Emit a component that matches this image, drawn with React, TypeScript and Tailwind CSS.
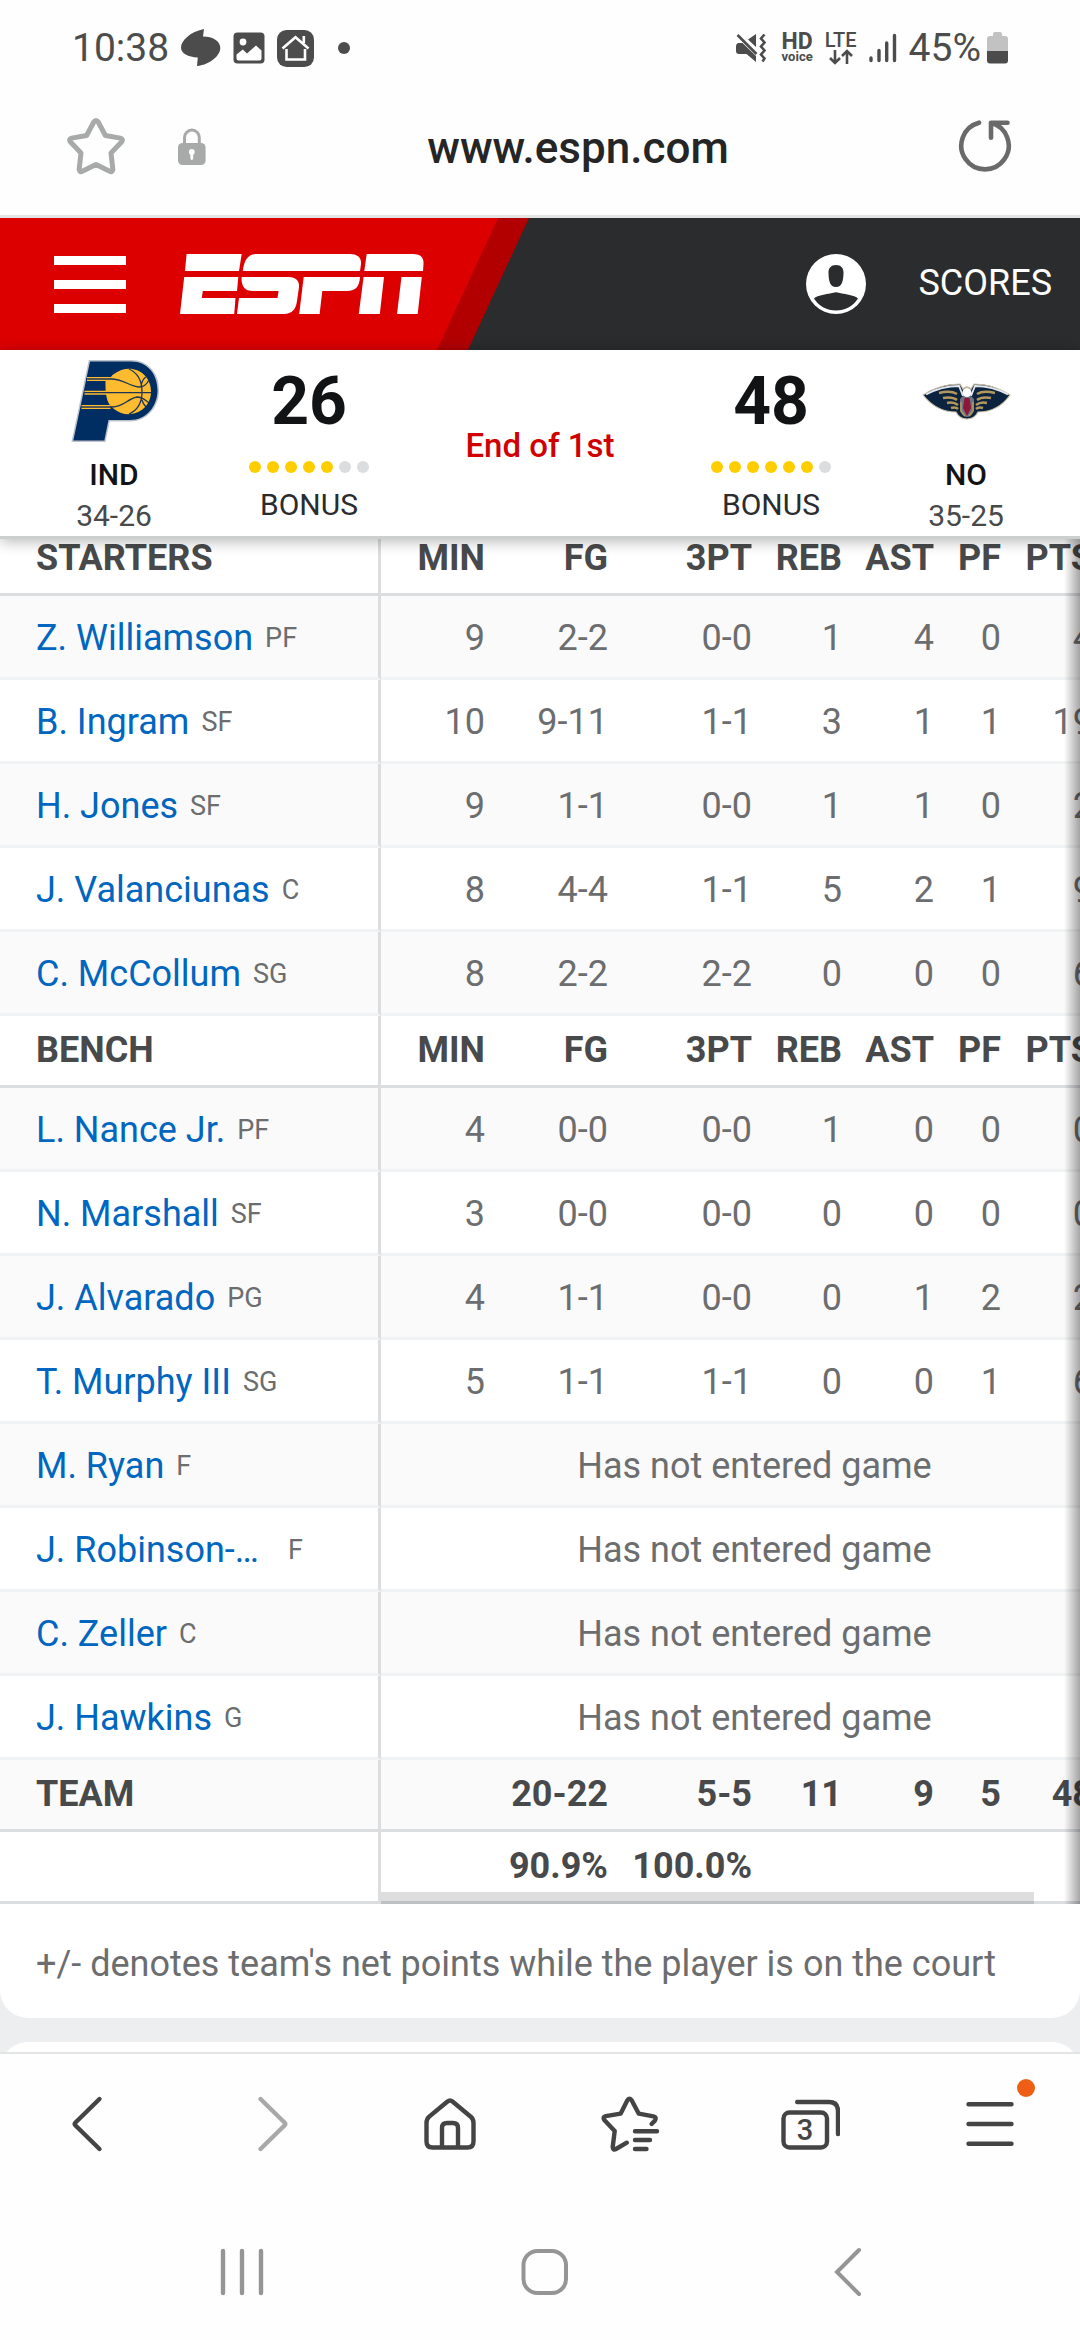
import type { ReactNode } from "react";

interface Player {
  name: string;
  pos: string;
  // MIN, FG, 3PT, REB, AST, PF, PTS. Missing when the player has not played yet.
  stats?: string[];
}

const columns = ["MIN", "FG", "3PT", "REB", "AST", "PF", "PTS"];

const starters: Player[] = [
  { name: "Z. Williamson", pos: "PF", stats: ["9", "2-2", "0-0", "1", "4", "0", "4"] },
  { name: "B. Ingram", pos: "SF", stats: ["10", "9-11", "1-1", "3", "1", "1", "19"] },
  { name: "H. Jones", pos: "SF", stats: ["9", "1-1", "0-0", "1", "1", "0", "2"] },
  { name: "J. Valanciunas", pos: "C", stats: ["8", "4-4", "1-1", "5", "2", "1", "9"] },
  { name: "C. McCollum", pos: "SG", stats: ["8", "2-2", "2-2", "0", "0", "0", "6"] },
];

const bench: Player[] = [
  { name: "L. Nance Jr.", pos: "PF", stats: ["4", "0-0", "0-0", "1", "0", "0", "0"] },
  { name: "N. Marshall", pos: "SF", stats: ["3", "0-0", "0-0", "0", "0", "0", "0"] },
  { name: "J. Alvarado", pos: "PG", stats: ["4", "1-1", "0-0", "0", "1", "2", "2"] },
  { name: "T. Murphy III", pos: "SG", stats: ["5", "1-1", "1-1", "0", "0", "1", "6"] },
  { name: "M. Ryan", pos: "F" },
  { name: "J. Robinson-Earl", pos: "F" },
  { name: "C. Zeller", pos: "C" },
  { name: "J. Hawkins", pos: "G" },
];

const teamTotals = ["", "20-22", "5-5", "11", "9", "5", "48"];
const teamPercents = ["", "90.9%", "100.0%", "", "", "", ""];

function StatusBar() {
  return (
    <div className="flex h-24 items-center justify-between pl-18 pr-18 text-[39px] leading-none text-[#4c4c4c]">
      <div className="flex items-center gap-3">
        <span>10:38</span>
        <svg className="h-[38px] w-10" viewBox="0 0 40 38" fill="currentColor">
          <path d="M23 0 22 7.5C32 7.5 39.3 12 39.3 19S30 35.5 16 37l.8-8.5C7 28 0 24.500 0 18.500S8 3 23 0z" />
        </svg>
        <svg className="h-8 w-8" viewBox="0 0 32 32">
          <rect x="0.500" y="0.500" width="31" height="31" rx="4" fill="currentColor" />
          <circle cx="10" cy="10" r="3.400" fill="#fff" />
          <path d="M3.500 22.500 9.800 17.500l4.200 4 9-8 5.500 5v8q0 2-2 2h-21q-2 0-2-2z" fill="#fff" />
        </svg>
        <svg className="h-[37px] w-[37px]" viewBox="0 0 37 37" fill="none" stroke="#fff" strokeWidth="2.600">
          <rect width="37" height="37" rx="9.500" fill="currentColor" stroke="none" />
          <path d="M5.500 18.500 18.500 7.200l13 11.300M26.800 6v7M9.500 19v10.500h18.500V19" />
        </svg>
        <span className="ml-3 h-3 w-3 rounded-full bg-[#4c4c4c]" />
      </div>
      <div className="flex items-center gap-3">
        <svg className="mr-1 h-8 w-[30px]" viewBox="0 0 30 32" fill="currentColor">
          <path d="M2 11h4.500l13.500 13v6L10.500 22H3q-3 0-3-3v-5q0-2 2-3zM20 2v13l-8-7.500z" />
          <path d="M1.500 3 20.500 22M28.500 2.500l-3.500 4 3.500 4-3.500 4 3.500 4-3.500 4 3.500 4-2 3" fill="none" stroke="currentColor" strokeWidth="2.600" />
        </svg>
        <div className="flex flex-col items-center font-bold">
          <span className="text-[23px] leading-[18px]">HD</span>
          <span className="text-[13px] leading-3">voice</span>
        </div>
        <div className="flex flex-col items-center font-medium">
          <span className="text-xl leading-[18px]">LTE</span>
          <svg className="h-4 w-6" viewBox="0 0 24 16" fill="none" stroke="currentColor" strokeWidth="2.600">
            <path d="M6 1v13M1 9l5 5 5-5M18 15V2M13 7l5-5 5 5" />
          </svg>
        </div>
        <svg className="h-[30px] w-7" viewBox="0 0 28 30" stroke="currentColor" strokeWidth="3.400" strokeLinecap="round">
          <path d="M2 25v2.500M10 17.500v10M17.700 10v17.500M25.500 2.500v25" />
        </svg>
        <div className="flex items-center gap-1.5">
          <span>45%</span>
          <svg className="h-8 w-[21px]" viewBox="0 0 21 32">
            <path d="M6 2q0-2 2-2h5q2 0 2 2v2h3q3 0 3 3v12H0V7q0-3 3-3h3z" fill="#c2c2c2" />
            <path d="M0 19h21v9.500q0 3-3 3H3q-3 0-3-3z" fill="currentColor" />
          </svg>
        </div>
      </div>
    </div>
  );
}

function AddressBar() {
  return (
    <div className="flex items-center border-b-3 border-[#e3e5e5] px-[66px] pb-[39px] pt-5">
      <div className="flex items-center gap-[52px]">
        <button aria-label="Add bookmark" className="text-[#a8a9a9]">
          <svg className="h-15 w-15" viewBox="0 0 60 60" fill="none" stroke="currentColor" strokeWidth="5" strokeLinejoin="round">
            <path d="M27.800 6q2.200-3 4.400 0l7.200 13.500 15 2.600q3.200 1 1.300 3.600L45 37l1.900 16.500q-.6 3-3.200 1.800L30 48.500l-13.700 6.800q-2.600 1.200-3.200-1.800L15 37 4.300 25.700q-1.900-2.600 1.300-3.600l15-2.600z" />
          </svg>
        </button>
        <svg className="h-[37px] w-7 text-[#a8a9a9]" viewBox="0 0 28 37">
          <path d="M6.500 17V9.500a7.300 7.300 0 0 1 14.800 0V17" fill="none" stroke="currentColor" strokeWidth="3" />
          <rect y="15" width="27.600" height="22" rx="4.500" fill="currentColor" />
          <circle cx="13.800" cy="24" r="2.900" fill="#fff" />
          <path d="M13.800 24v6.500" stroke="#fff" strokeWidth="2.800" strokeLinecap="round" />
        </svg>
      </div>
      <span className="flex-1 pr-1 pt-1 text-center text-[44px] font-medium leading-14 text-[#252525]">www.espn.com</span>
      <button aria-label="Reload" className="text-[#6a6a6a]">
        <svg className="h-15 w-15" viewBox="0 0 60 60" fill="none" stroke="currentColor" strokeWidth="4.600" strokeLinecap="round" strokeLinejoin="round">
          <path d="M25 6.700a23.700 23.700 0 1 0 12 0h16.500M37 6.700v15" />
        </svg>
      </button>
    </div>
  );
}

function EspnLogo() {
  return (
    <svg className="h-15 w-61" viewBox="0 0 244 60" fill="#fff">
      <path d="M6.600 0h55.100L59 17H5z" />
      <path d="M4.200 23h54.100L57 37H22.800l-1 7h33.700l-1.300 16H0z" />
      <path d="M62.800 17C64 6 68 0 77 0h93c8 0 11.500 4 11 10l-1 7z" />
      <path d="M61.700 23H109c7 0 10.500 4 10 10l-2 14c-1 8-5 13-13 13H57l2-16h38.500l1.100-7H73c-9 0-12-6-11.300-14z" />
      <path d="M123.700 23H180c-.5 9-4 14-13 14h-24.700l-2.700 23h-20.400z" />
      <path d="M186.700 0H233c8 0 11 4 10.500 10l-.5 7h-58.700z" />
      <path d="M183.600 23H204l-4.200 37h-21zM221.500 23h20.300l-4.100 37H217z" />
    </svg>
  );
}

function SiteHeader() {
  return (
    <header className="flex h-33 items-stretch justify-between bg-[#2b2c2d]">
      <div className="w-[529px] bg-[#b20000] [clip-path:polygon(0_0,100%_0,468px_100%,0_100%)]">
        <div className="flex h-full w-[498px] items-center gap-[54px] bg-[#dd0000] pl-[54px] [clip-path:polygon(0_0,100%_0,437px_100%,0_100%)]">
          <button aria-label="Menu" className="flex flex-col gap-[15px]">
            <span className="h-[9px] w-18 bg-white" />
            <span className="h-[9px] w-18 bg-white" />
            <span className="h-[9px] w-18 bg-white" />
          </button>
          <a href="#" aria-label="ESPN">
            <EspnLogo />
          </a>
        </div>
      </div>
      <div className="flex items-center gap-13 pr-7">
        <button aria-label="Account">
          <svg className="h-15 w-15" viewBox="0 0 60 60">
            <circle cx="30" cy="30" r="30" fill="#fff" />
            <path d="M30 11c5 0 7.700 3 7.500 8C37.300 27 36 33 30 33s-7.300-6-7.500-14c-.2-5 2.500-8 7.500-8zM8 44.500c3-3.200 15-4.500 22-6.200 7 1.700 19 3 22 6.200-5 8-13 12-22 12s-17-4-22-12z" fill="#2b2c2d" />
          </svg>
        </button>
        <a href="#" className="pb-0.5 text-4xl text-white">
          SCORES
        </a>
      </div>
    </header>
  );
}

function PacersLogo() {
  return (
    <svg className="h-[90px] w-[90px]" viewBox="0 0 90 90">
      <path d="M21 5.500h41c17 0 26.500 13 26.500 29S77 64 61 64H39.500l-4.200 20.500h-31z" fill="#002d62" stroke="#bcc2ca" strokeWidth="3" />
      <path d="M21 5.500h41c17 0 26.500 13 26.500 29S77 64 61 64H39.500l-4.200 20.500h-31z" fill="#002d62" />
      <path d="M18 23h24M15.500 36.700h24M12.500 51h29" stroke="#fdbb30" strokeWidth="4" />
      <path d="M36.500 24.500C44 22 40 21 45 18c16-12 37-2 37 17.500S60 65 45 53c-4-4-9-6-8.500-28.500z" fill="#fdbb30" />
      <path d="M17 23h25c12 0 18 7 28 8 5 0 8-3 10-7M15 36.700h67M12 51h31c12 0 15-8 25-10 6 0 9 4 12 6M60 13c9 4 13 13 13 23s-4 18-13 22M72 30c1-5 3-8 5-9M73 44c1 4 3 6 4 7" fill="none" stroke="#1c3557" strokeWidth="1.300" />
    </svg>
  );
}

function PelicansLogo() {
  return (
    <svg className="h-[90px] w-[90px]" viewBox="0 0 90 90">
      <path d="M2 39C14 31 27 28 39 28l3 5q4-4 8 0l3-5c12 0 24 3 36 11C82 49 72 56 57 56c-2 4-6 7-11 7s-9-3-11-7C20 56 10 49 2 39z" fill="#0c2340" stroke="#c9bfa4" strokeWidth="1.200" />
      <path d="M5 38.500C15 33 26 30 38 30l4 10M87 38.500C77 33 66 30 54 30l-4 10" fill="none" stroke="#e4e8ee" strokeWidth="1.800" />
      <path d="M18 37c8-2 13-2 18 1M22 42c6-1 10-1 14 2M26 47c4-1 7-1 11 2M30 52c3-1 5-1 7 1M74 37c-8-2-13-2-18 1M70 42c-6-1-10-1-14 2M66 47c-4-1-7-1-11 2M62 52c-3-1-5-1-7 1" fill="none" stroke="#b4975a" strokeWidth="2.600" />
      <path d="M39 43q7-8 14 0v11q-2 7-7 7t-7-7z" fill="#6f7480" />
      <circle cx="46" cy="36.500" r="4.500" fill="#fff" />
      <path d="M43.500 42h5l1.500 10-4 8-4-8z" fill="#8d1738" />
      <path d="M40 46v9l4 5M52 46v9l-4 5" fill="none" stroke="#b4975a" strokeWidth="1.600" />
    </svg>
  );
}

function Team({ logo, abbr, record }: { logo: ReactNode; abbr: string; record: string }) {
  return (
    <div className="flex flex-col items-center pt-1.5 text-[30px]">
      {logo}
      <span className="mt-2 font-medium leading-[42px] text-[#121315]">{abbr}</span>
      <span className="leading-10 text-[#48494a]">{record}</span>
    </div>
  );
}

function Score({ points, timeouts }: { points: number; timeouts: number }) {
  return (
    <div className="flex flex-col items-center pt-4">
      <span className="text-[66px] font-bold leading-[72px] text-[#121315]">{points}</span>
      <div className="mt-[23px] flex gap-1.5">
        {Array.from({ length: 7 }, (_, i) => (
          <span key={i} className={`h-3 w-3 rounded-full ${i < timeouts ? "bg-[#ffce00]" : "bg-[#dcdddf]"}`} />
        ))}
      </div>
      <span className="mt-3.5 text-[30px] leading-9 text-[#2b2c2d]">BONUS</span>
    </div>
  );
}

function ScoreStrip() {
  return (
    <section className="relative z-10 grid grid-cols-[228px_162px_1fr_162px_228px] border-b-3 border-[#cdcfcf] bg-white shadow-[0_2px_14px_rgba(0,0,0,0.3)]">
      <Team logo={<PacersLogo />} abbr="IND" record="34-26" />
      <Score points={26} timeouts={5} />
      <div className="flex items-center justify-center pt-1.5 text-[33px] font-medium text-[#d00000]">End of 1st</div>
      <Score points={48} timeouts={6} />
      <Team logo={<PelicansLogo />} abbr="NO" record="35-25" />
    </section>
  );
}

function HeaderRow({ title }: { title: string }) {
  return (
    <tr className="h-18 font-bold text-[#48494a]">
      <th scope="col" className="border-b-3 border-r-3 border-[#dcdddf] pb-0.5 pl-9 text-left">
        {title}
      </th>
      {columns.map((col) => (
        <th key={col} scope="col" className="border-b-3 border-[#dcdddf] pb-0.5 pr-3 text-right last:pr-[35px]">
          {col}
        </th>
      ))}
    </tr>
  );
}

function PlayerRow({ player }: { player: Player }) {
  return (
    <tr className="h-21 text-[#6c6d6f] odd:bg-white even:bg-[#fafafa]">
      <td className="border-b-3 border-r-3 border-b-[#f1f2f3] border-r-[#dcdddf] pl-9 pt-[3px]">
        <div className="flex items-center gap-3">
          <a href="#" className="max-w-[240px] truncate text-[#0066bf]">
            {player.name}
          </a>
          <span className="text-[27px]">{player.pos}</span>
        </div>
      </td>
      {player.stats ? (
        player.stats.map((value, i) => (
          <td key={i} className="border-b-3 border-[#f1f2f3] pr-3 pt-[3px] text-right last:pr-[35px]">
            {value}
          </td>
        ))
      ) : (
        <td colSpan={columns.length} className="border-b-3 border-[#f1f2f3] pt-[3px] text-center">
          Has not entered game
        </td>
      )}
    </tr>
  );
}

function TotalRow({ title, values, shaded }: { title: string; values: string[]; shaded?: boolean }) {
  return (
    <tr className={`h-18 font-bold text-[#48494a] ${shaded ? "bg-[#fafafa]" : "bg-white"}`}>
      <td className="border-b-3 border-r-3 border-[#dcdddf] pb-0.5 pl-9">{title}</td>
      {values.map((value, i) => (
        <td key={i} className="border-b-3 border-[#dcdddf] pb-0.5 pr-3 text-right last:pr-[35px]">
          {value}
        </td>
      ))}
    </tr>
  );
}

function BoxScore() {
  return (
    // Scrolled so that the first header row is partly under the sticky score strip
    <div className="relative -mt-[15px] overflow-hidden">
      <table className="w-full min-w-[1128px] table-fixed border-separate border-spacing-0 text-4xl">
        <colgroup>
          <col className="w-[381px]" />
          <col className="w-[116px]" />
          <col className="w-[123px]" />
          <col className="w-[144px]" />
          <col className="w-[90px]" />
          <col className="w-[92px]" />
          <col className="w-[67px]" />
          <col />
        </colgroup>
        <tbody>
          <HeaderRow title="STARTERS" />
          {starters.map((p) => (
            <PlayerRow key={p.name} player={p} />
          ))}
        </tbody>
        <tbody>
          <HeaderRow title="BENCH" />
          {bench.map((p) => (
            <PlayerRow key={p.name} player={p} />
          ))}
        </tbody>
        <tbody>
          <TotalRow title="TEAM" values={teamTotals} shaded />
          <TotalRow title="" values={teamPercents} />
        </tbody>
      </table>
      {/* Scroll thumb and edge fade */}
      <div className="absolute bottom-0 left-[381px] right-[46px] h-3 bg-black/13" />
      <div className="absolute inset-y-0 right-0 w-4 bg-linear-to-r from-transparent to-black/35" />
    </div>
  );
}

function ToolButton({ label, muted, children }: { label: string; muted?: boolean; children: ReactNode }) {
  return (
    <button aria-label={label} className={`relative h-15 w-15 ${muted ? "text-[#a8a8a8]" : "text-[#444444]"}`}>
      <svg className="h-15 w-15" viewBox="0 0 60 60" fill="none" stroke="currentColor" strokeWidth="4.400" strokeLinecap="round" strokeLinejoin="round">
        {children}
      </svg>
      {label === "More" && <span className="absolute -right-[15px] -top-[15px] h-[18px] w-[18px] rounded-full bg-[#ee5f15]" />}
    </button>
  );
}

function BrowserToolbar() {
  return (
    <nav className="grid h-[142px] grid-cols-6 place-items-center border-t-2 border-[#e3e4e4] bg-[#fefefe]">
      <ToolButton label="Back">
        <path d="M39.500 5 15.500 28.500q-1.500 1.500 0 3L39.500 55" />
      </ToolButton>
      <ToolButton label="Forward" muted>
        <path d="m20.500 5 24 23.500q1.500 1.500 0 3L20.500 55" />
      </ToolButton>
      <ToolButton label="Home">
        <path d="M6.500 29q0-4 2.700-6.300L27.500 7.500q2.500-2 5 0l18.300 15.200Q53.500 25 53.500 29v18.500q0 6-6 6h-35q-6 0-6-6zM22 53V34q0-5 5-5h6q5 0 5 5v19" />
      </ToolButton>
      <ToolButton label="Bookmarks">
        <path d="M51.600 30 55 26.500q2-3.500-1.500-4.200l-14.700-2.600L31.500 6q-2-2.500-4 0l-6.900 13.700-14.800 2.500q-3.500 1-1.500 3.800L14.700 37l-2 16q.3 3.500 3.300 2l10.800-6.300M35 37.300h22M35 46h15M35 55h11.500" />
      </ToolButton>
      <ToolButton label="Tabs">
        <rect x="3.500" y="18.500" width="43.500" height="35" rx="6" />
        <path d="M17.200 8H49q9 0 9 9v23" />
        <text x="25" y="46" textAnchor="middle" fontSize="29" fontWeight="500" fill="currentColor" stroke="none">
          3
        </text>
      </ToolButton>
      <ToolButton label="More">
        <path d="M8.500 10.300h43M8.500 30h43M8.500 49.700h43" />
      </ToolButton>
    </nav>
  );
}

function SystemNav() {
  return (
    <nav className="flex justify-between bg-[#fefefe] pb-[38px] pl-53 pr-[203px] pt-12 text-[#959595]">
      <button aria-label="Recent apps">
        <svg className="h-15 w-15" viewBox="0 0 60 60" stroke="currentColor" strokeWidth="4.400" strokeLinecap="round">
          <path d="M11 9v42M30 9v42M49 9v42" />
        </svg>
      </button>
      <button aria-label="Home screen">
        <svg className="h-15 w-15" viewBox="0 0 60 60" fill="none" stroke="currentColor" strokeWidth="4">
          <rect x="8.500" y="9" width="42.500" height="42" rx="14" />
        </svg>
      </button>
      <button aria-label="System back">
        <svg className="h-15 w-15" viewBox="0 0 60 60" fill="none" stroke="currentColor" strokeWidth="4" strokeLinecap="round">
          <path d="M42 8 20 30l22 22" />
        </svg>
      </button>
    </nav>
  );
}

export default function App() {
  return (
    <div className="min-h-screen overflow-x-hidden bg-[#fefefe] font-['Roboto',sans-serif]">
      <StatusBar />
      <AddressBar />
      <SiteHeader />
      <ScoreStrip />
      <main className="bg-[#edeef0]">
        <div className="overflow-hidden rounded-b-[28px] bg-white">
          <BoxScore />
          <p className="px-9 pb-[30px] pt-9 text-4xl leading-12 text-[#6c6d6f]">
            +/- denotes team's net points while the player is on the court
          </p>
        </div>
        {/* Top edge of the next card */}
        <div className="mt-6 h-2.5 overflow-hidden">
          <div className="h-15 rounded-t-[28px] bg-white" />
        </div>
      </main>
      <BrowserToolbar />
      <SystemNav />
    </div>
  );
}
